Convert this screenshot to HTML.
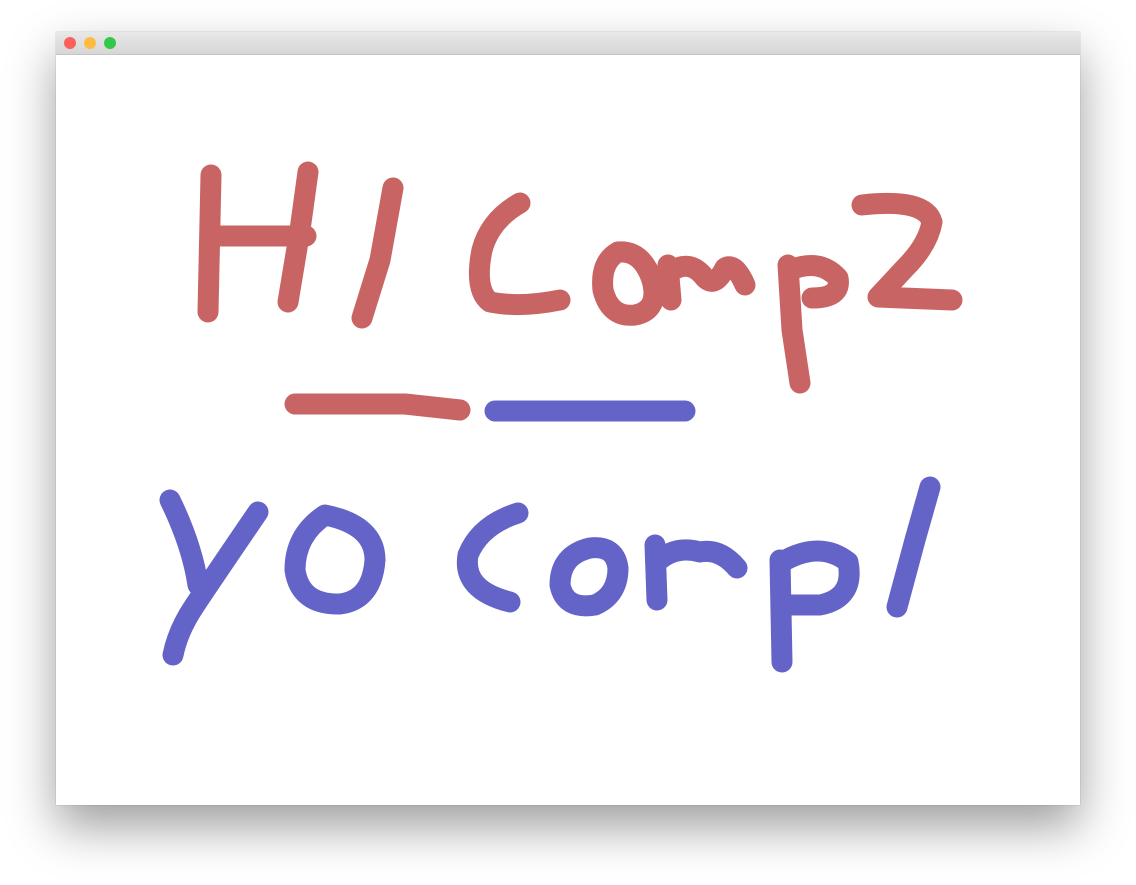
<!DOCTYPE html>
<html><head><style>
html,body{margin:0;padding:0;background:#fff;width:1136px;height:885px;overflow:hidden}
.win{position:absolute;left:56px;top:32px;width:1024px;height:773px;background:#fff;box-shadow:0 22px 45px rgba(0,0,0,.38),0 0 1px rgba(0,0,0,.3)}
.tb{position:absolute;left:0;top:0;width:1024px;height:22px;background:linear-gradient(#e8e8e8,#d6d6d6);border-bottom:1px solid #c4c4c4}
.d{position:absolute;top:5px;width:12px;height:12px;border-radius:50%}
svg{position:absolute;left:0;top:0}
</style></head><body>
<div class="win"><div class="tb">
<div class="d" style="left:8px;background:#fc605c"></div>
<div class="d" style="left:28px;background:#fdbc40"></div>
<div class="d" style="left:48px;background:#34c84a"></div>
</div></div>
<svg width="1136" height="885" fill="none" stroke-linecap="round" stroke-linejoin="round" stroke-width="21">
<g stroke="#c86464">
<path d="M211 175 L208 312"/>
<path d="M308 172 L300 230 L288 302"/>
<path d="M212 236 L306 236"/>
<path d="M393 188 L380 260 L362 318"/>
<path d="M520 203 Q490 220 482 250 Q474 290 490 302 Q520 308 560 300"/>
<path d="M618 252 Q600 262 603 290 Q610 318 635 315 Q660 310 652 280 Q642 250 618 252"/>
<path d="M671 300 L668 265 M670 272 Q690 258 705 278 Q715 288 725 268 Q735 262 745 285"/>
<path d="M788 265 L792 330 L800 383 M790 270 Q820 258 838 278 Q842 298 812 298"/>
<path d="M862 205 Q925 198 932 222 Q928 245 905 268 L878 297 L952 300"/>
<path d="M295 404 L405 404 L460 410"/>
</g>
<g stroke="#6464c8">
<path d="M495 411 L685 411"/>
<path d="M170 500 Q192 545 198 585"/>
<path d="M258 512 Q215 575 195 605 Q178 630 173 655"/>
<path d="M325 515 Q295 535 295 570 Q300 605 340 604 Q372 600 375 560 Q375 525 325 515"/>
<path d="M518 513 Q480 525 468 555 Q462 590 510 602"/>
<path d="M590 548 Q560 555 560 585 Q565 610 595 605 Q618 595 618 568 Q615 545 590 548"/>
<path d="M655 545 L657 600 M657 562 Q675 545 700 552 Q720 548 737 568"/>
<path d="M780 560 L782 662 M782 562 Q820 540 848 562 Q855 598 820 605 L785 605"/>
<path d="M930 487 L915 540 L897 607"/>
</g>
</svg>
</body></html>
